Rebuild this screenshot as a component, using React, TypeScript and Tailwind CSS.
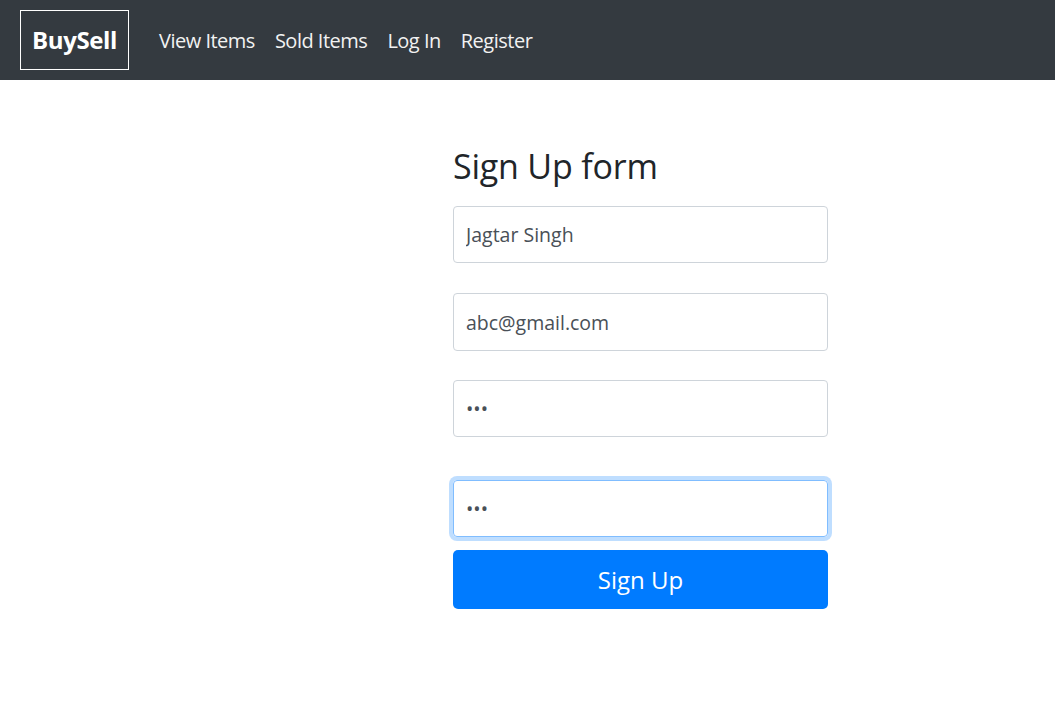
export default function App() {
  const links = ['View Items', 'Sold Items', 'Log In', 'Register'];

  return (
    <div className="min-h-[704px] bg-white" style={{ fontFamily: '"Open Sans", "Noto Sans", sans-serif' }}>
      {/* Navbar */}
      <nav className="h-[80px] bg-[#343a40] flex items-center px-[20px]">
        <div className="h-[60px] w-[109px] border border-white flex items-center justify-center text-white font-bold text-[24px] tracking-[-0.4px]">
          BuySell
        </div>
        <ul className="flex items-center ml-[30px] gap-[20px] pt-[2px]">
          {links.map((l) => (
            <li key={l} className="text-[#f2f2f2] text-[20px] tracking-[-0.5px]">
              {l}
            </li>
          ))}
        </ul>
      </nav>

      {/* Form */}
      <div className="ml-[453px] w-[375px] pt-[64px]">
        <h2 className="text-[#212529] text-[34px] leading-[44px] mb-[18px] tracking-[-0.2px]">Sign Up form</h2>
        <form className="flex flex-col">
          <input
            type="text"
            defaultValue="Jagtar Singh"
            className="h-[57px] w-full border border-[#ced4da] rounded-[4px] px-[12px] text-[19.5px] text-[#495057] outline-none"
          />
          <input
            type="email"
            defaultValue="abc@gmail.com"
            className="mt-[30px] h-[58px] w-full border border-[#ced4da] rounded-[4px] px-[12px] text-[19.5px] text-[#495057] outline-none"
          />
          <input
            type="password"
            defaultValue="abc"
            className="mt-[29px] h-[57px] w-full border border-[#ced4da] rounded-[4px] px-[12px] text-[19.5px] text-[#495057] outline-none"
          />
          <input
            type="password"
            defaultValue="abc"
            autoFocus
            className="mt-[43px] h-[57px] w-full border border-[#80bdff] rounded-[4px] px-[12px] text-[19.5px] text-[#495057] caret-[#212529] outline-none shadow-[0_0_0_4px_rgba(0,123,255,0.25)]"
          />
          <button
            type="button"
            className="mt-[13px] h-[59px] w-full rounded-[5px] bg-[#007bff] text-white text-[24px]"
          >
            Sign Up
          </button>
        </form>
      </div>
    </div>
  );
}
